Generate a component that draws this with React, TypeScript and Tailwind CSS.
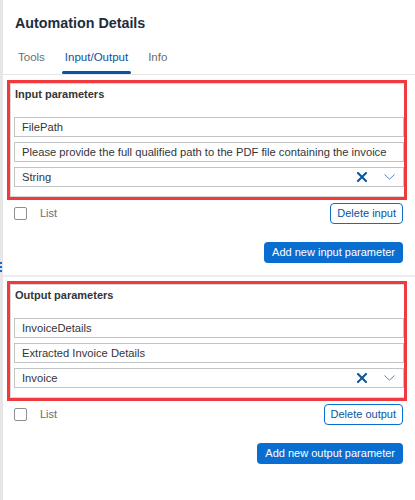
import React from "react";

interface ParamSectionProps {
  title: string;
  name: string;
  description: string;
  type: string;
  deleteLabel: string;
  addLabel: string;
}

function XIcon() {
  return (
    <svg width="10" height="10" viewBox="0 0 10 10" fill="none">
      <path d="M1 1L9 9M9 1L1 9" stroke="#0854a0" strokeWidth="2" strokeLinecap="square" />
    </svg>
  );
}

function ChevronDown() {
  return (
    <svg width="11" height="6" viewBox="0 0 11 6" fill="none">
      <path d="M0.5 0.5L5.5 5.2L10.5 0.5" stroke="#5b86bd" strokeWidth="1" />
    </svg>
  );
}

function Field({ value, select }: { value: string; select?: boolean }) {
  return (
    <div className="flex h-[20px] items-center border border-[#c2c5c8] bg-white pl-[7px] pr-[8px] text-[11.2px] text-[#32363a]">
      <span className="flex-1 truncate">{value}</span>
      {select && (
        <div className="flex items-center gap-[17px]">
          <XIcon />
          <ChevronDown />
        </div>
      )}
    </div>
  );
}

function ParamSection({ title, name, description, type, deleteLabel, addLabel }: ParamSectionProps) {
  return (
    <div>
      {/* annotated panel */}
      <div className="ml-[4px] mr-[8px] border-[3px] border-[#f03a3e]">
        <div className="border border-r-0 border-[#d5d7d9] pl-[3px] pt-[3px] pb-[9px]">
          <div className="h-[14px] pl-[1px] text-[11px] font-bold leading-[14px] text-[#32363a]">
            {title}
          </div>
          <div className="mt-[16px] flex flex-col gap-[5px]">
            <Field value={name} />
            <Field value={description} />
            <Field value={type} select />
          </div>
        </div>
      </div>

      <div className="mt-[3px] flex items-center justify-between pl-[11px] pr-[12px]">
        <div className="flex items-center gap-[13px]">
          <span className="h-[13px] w-[13px] rounded-[2px] border border-[#8a8f95] bg-white" />
          <span className="text-[11px] text-[#6a6d70]">List</span>
        </div>
        <button
          type="button"
          className="h-[21px] rounded-[4px] border border-[#0a6ed1] bg-white px-[6px] text-[11px] text-[#0854a0]"
        >
          {deleteLabel}
        </button>
      </div>

      <div className="mt-[18px] flex justify-end pr-[12px]">
        <button
          type="button"
          className="h-[21px] rounded-[4px] bg-[#0a6ed1] px-[8px] text-[11px] text-white"
        >
          {addLabel}
        </button>
      </div>
    </div>
  );
}

export default function App() {
  return (
    <div className="relative h-[500px] w-[415px] border-l-[3px] border-[#e6e6e6] bg-white font-['Liberation_Sans',Arial,sans-serif] text-[#32363a]">
      {/* Header */}
      <div className="pl-[12px] pt-[14px] text-[14.3px] font-bold leading-[18px] text-[#1d2d3e]">
        Automation Details
      </div>

      {/* Tabs */}
      <div className="mt-[17px] flex gap-[14px] border-b border-[#e5e5e5] pl-[12px]">
        {["Tools", "Input/Output", "Info"].map((t) => {
          const active = t === "Input/Output";
          return (
            <div key={t} className="flex flex-col">
              <span
                className={`px-[3px] text-[11.5px] leading-[16px] ${
                  active ? "text-[#0854a0]" : "text-[#6a6d70]"
                }`}
              >
                {t}
              </span>
              <span
                className={`mt-[6px] h-[3px] rounded-full ${
                  active ? "bg-[#0854a0]" : "bg-transparent"
                }`}
              />
            </div>
          );
        })}
      </div>

      <div className="mt-[5px]">
        <ParamSection
          title="Input parameters"
          name="FilePath"
          description="Please provide the full qualified path to the PDF file containing the invoice"
          type="String"
          deleteLabel="Delete input"
          addLabel="Add new input parameter"
        />
      </div>

      <div className="mt-[12px] h-[2px] bg-[#ededed]" />

      <div className="mt-[4px]">
        <ParamSection
          title="Output parameters"
          name="InvoiceDetails"
          description="Extracted Invoice Details"
          type="Invoice"
          deleteLabel="Delete output"
          addLabel="Add new output parameter"
        />
      </div>

      {/* splitter handle */}
      <span className="absolute left-[-3px] top-[262px] h-[10px] w-[2px] border-l-2 border-dotted border-[#0a6ed1]" />
    </div>
  );
}
